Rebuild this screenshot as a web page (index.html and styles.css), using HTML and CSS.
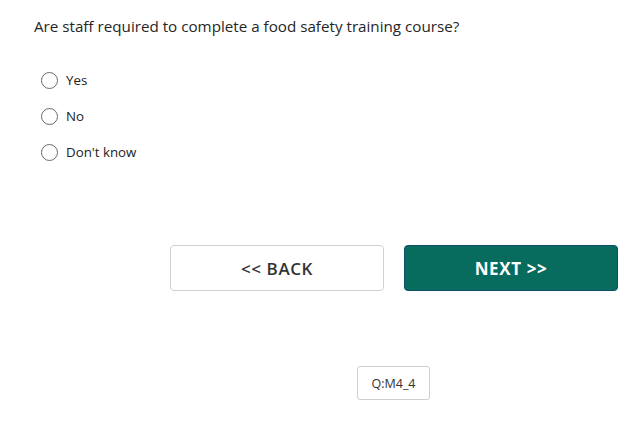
FILE: index.html
```html
<!DOCTYPE html>
<html>
<head>
<meta charset="utf-8">
<link rel="stylesheet" href="styles.css">
</head>
<body>
<div class="page">
  <p class="question">Are staff required to complete a food safety training course?</p>
  <div class="options">
    <label class="option"><span class="radio"></span><span class="opt-text">Yes</span></label>
    <label class="option"><span class="radio"></span><span class="opt-text">No</span></label>
    <label class="option"><span class="radio"></span><span class="opt-text">Don't know</span></label>
  </div>
  <div class="nav">
    <button class="btn btn-back">&lt;&lt; BACK</button>
    <button class="btn btn-next">NEXT &gt;&gt;</button>
  </div>
  <div class="qid-row">
    <span class="qid">Q:M4_4</span>
  </div>
</div>
</body>
</html>
```
FILE: styles.css
```css
* { box-sizing: border-box; }
html, body { margin: 0; padding: 0; background: #fff; }
body {
  font-family: "Open Sans", "Noto Sans", "Liberation Sans", sans-serif;
  color: #222;
}
.page {
  width: 633px;
  height: 427px;
  padding: 15px 0 0 34px;
}
.question {
  margin: 0;
  font-size: 15.2px;
  line-height: 22px;
  color: #262626;
}
.options {
  margin-top: 35px;
  display: flex;
  flex-direction: column;
  gap: 20px;
  padding-left: 7px;
}
.option {
  display: flex;
  align-items: center;
  height: 16px;
  font-size: 13.3px;
  color: #222;
}
.radio {
  width: 17px;
  height: 17px;
  border: 1px solid #6a6a6a;
  border-radius: 50%;
  margin-right: 8px;
  flex: none;
}
.nav {
  margin-top: 85px;
  margin-left: 136px;
  display: flex;
  gap: 20px;
}
.btn {
  width: 214px;
  height: 46px;
  border-radius: 4px;
  font-family: "Open Sans", "Noto Sans", sans-serif;
  font-size: 17px;
  letter-spacing: 0.6px;
  cursor: pointer;
}
.btn-back {
  background: #fff;
  border: 1px solid #cfcfcf;
  color: #333;
  font-weight: 600;
}
.btn-next {
  background: #076c5d;
  border: 1px solid #0a4e6a;
  color: #fff;
  font-weight: 700;
}
.qid-row {
  margin-top: 75px;
  margin-left: 323px;
  display: flex;
}
.qid {
  display: inline-flex;
  align-items: center;
  justify-content: center;
  width: 73px;
  height: 34px;
  border: 1px solid #cfcfcf;
  border-radius: 3px;
  font-size: 12.5px;
  color: #333;
}
```
